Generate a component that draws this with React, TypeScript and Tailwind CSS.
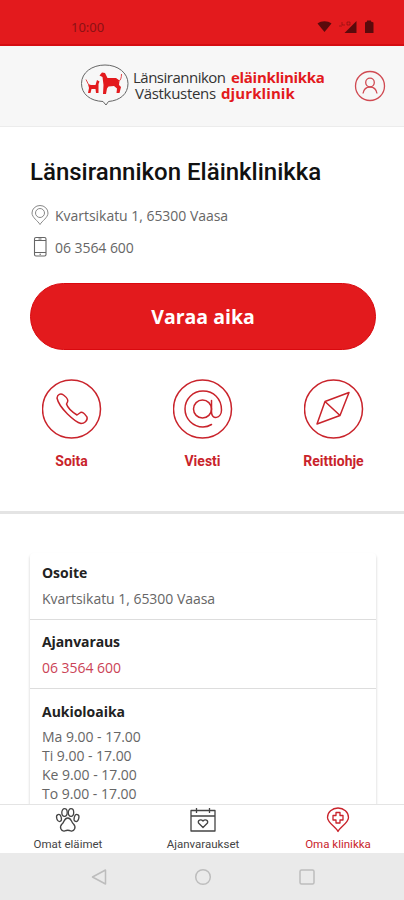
import type { ReactNode } from 'react';

const openingHours = ['Ma 9.00 - 17.00', 'Ti 9.00 - 17.00', 'Ke 9.00 - 17.00', 'To 9.00 - 17.00'];

function StatusBar() {
  return (
    <div className="flex h-[46px] shrink-0 items-center border-b-2 border-[#d50d12] bg-[#e31a1d] pt-[9px] pl-[71px] text-[#5a0a0c]">
      <span className="w-[35px] font-['Noto_Sans',sans-serif] text-[13px] leading-4 text-[#8c1114]">10:00</span>
      <svg className="ml-[211px] h-4 w-[60px]" viewBox="0 0 60 16" fill="currentColor">
        <path d="M.5 4.5C4.500 1.500 10.500 1.500 14.500 4.500L7.500 13Z" />
        <path d="M39.500 2V14H27.500Z" />
        <path d="M22 7h3M25 3v3h3M30 3h3v3h-3z" fill="none" stroke="currentColor" strokeWidth="1" opacity=".45" />
        <path d="M48 3.500L50 2.500V1.500H54V2.500L56.500 3.500V14H48Z" />
      </svg>
    </div>
  );
}

function Logo() {
  return (
    <div className="flex items-start">
      <svg className="h-[44px] w-[50px]" viewBox="0 0 50 44">
        <path
          d="M23 38.500C10 38 1.500 31 1.500 20.500C1.500 9.500 12 2 25 2C38 2 48 10 48 20.500C48 31 40 37.500 28.500 38.500L26 42Z"
          fill="none"
          stroke="#666"
          strokeWidth="1"
        />
        <g fill="#e31a1d">
          <path d="M8 21L11 22H15.500L17 17L19.500 18.500L18.500 21V30H16L15.500 26H11.500L10.500 30H8L9 25Z" />
          <path d="M19.500 12.500L22 9.500L25 10L27.500 15H36L39.500 17.500L39 22L41 24L39.500 30H36.500L37 25.500L34 23L28.500 23.500L27 25.500L26 31H23L23.500 22L22.500 14Z" />
        </g>
        <path d="M9 22.500L6 16.500M38.500 18.500Q41.500 17 41.500 11" fill="none" stroke="#e3484b" strokeWidth="1" />
      </svg>
      <div className="mt-[6px] ml-[3px] font-['Open_Sans',sans-serif] text-[15px] leading-4 whitespace-nowrap text-[#333]">
        <p className="flex">
          <span className="w-[98px] tracking-[-0.5px]">Länsirannikon</span>
          <b className="tracking-[-0.3px] text-[#e31a1d]">eläinklinikka</b>
        </p>
        <p className="flex pl-[2px]">
          <span className="w-[86px] tracking-[-0.3px]">Västkustens</span>
          <b className="tracking-[0.1px] text-[#e31a1d]">djurklinik</b>
        </p>
      </div>
    </div>
  );
}

function Header() {
  return (
    <header className="flex h-[81px] shrink-0 items-start justify-between border-b border-[#ececec] bg-[#f7f7f7] pt-[17px] pr-[18px] pl-[80px]">
      <Logo />
      <svg className="mt-[7px] h-8 w-8" viewBox="0 0 32 32" fill="none" stroke="#d04a52" strokeWidth="1.3">
        <circle cx="16" cy="16" r="14.500" />
        <circle cx="16" cy="12.500" r="4.300" />
        <path d="M9 23.500C10 18 13 17 16 17S22 18 23 23.500" />
      </svg>
    </header>
  );
}

function ActionButton({ label, children }: { label: string; children: ReactNode }) {
  return (
    <button className="flex w-[60px] flex-col items-center text-[#c9232b]">
      <svg className="h-[60px] w-[60px]" viewBox="0 0 60 60" fill="none" stroke="currentColor" strokeWidth="1.5" strokeLinecap="round" strokeLinejoin="round">
        <circle cx="29.500" cy="30" r="29" />
        {children}
      </svg>
      <span className="mt-3 mr-px font-['Roboto',sans-serif] text-[14px] leading-5 font-bold whitespace-nowrap">{label}</span>
    </button>
  );
}

function NavItem({ label, className, children }: { label: string; className: string; children: ReactNode }) {
  return (
    <button className={`flex w-[80px] flex-col items-center ${className}`}>
      <svg className="h-[26px] w-[26px]" viewBox="0 0 26 26" fill="none" stroke="currentColor" strokeWidth="1.3" strokeLinejoin="round">
        {children}
      </svg>
      <span className="mt-[3px] font-['Roboto',sans-serif] text-[11.5px] leading-4 whitespace-nowrap">{label}</span>
    </button>
  );
}

export default function App() {
  return (
    <div className="flex h-[900px] w-[404px] flex-col overflow-hidden bg-white font-['Open_Sans',sans-serif] text-[#666]">
      <StatusBar />
      <Header />

      <main className="min-h-0 flex-1 overflow-hidden">
        <section className="h-[387px] border-b-[3px] border-[#e4e4e4] px-[30px] pt-[30px]">
          <h1 className="font-['Roboto',sans-serif] text-[24px] leading-[30px] font-medium whitespace-nowrap text-[#111]">
            Länsirannikon Eläinklinikka
          </h1>
          <div className="mt-[17px] flex h-[22px] items-center text-[14px] tracking-[-0.03px]">
            <svg className="mr-[5px] h-[22px] w-5" viewBox="0 0 20 22" fill="none" stroke="#888" strokeWidth="1">
              <path d="M10 20.500C8 17 2 13.500 2 9A8 7.500 0 0 1 18 9C18 13.500 12 17 10 20.500Z" />
              <circle cx="10" cy="9" r="4.500" />
            </svg>
            <span>Kvartsikatu 1, 65300 Vaasa</span>
          </div>
          <div className="mt-[10px] flex h-[22px] items-center text-[14px] tracking-[-0.05px]">
            <svg className="mr-[5px] h-[22px] w-5" viewBox="0 0 20 22" fill="none" stroke="#666" strokeWidth="1.1">
              <rect x="4.500" y="1.500" width="11.500" height="18.500" rx="1.500" />
              <path d="M4.500 4.500h11.500M4.500 16.500h11.500M8.500 3h3M9.500 18.300h1.500" />
            </svg>
            <span>06 3564 600</span>
          </div>
          <button className="mt-[25px] flex h-[67px] w-[346px] items-center justify-center rounded-full border border-[#d9090f] bg-[#e31a1d] pt-px text-[19.5px] font-bold text-white">
            Varaa aika
          </button>
          <div className="mt-[29px] ml-[12px] flex w-[322px] justify-between">
            <ActionButton label="Soita">
              <path d="M15 19C15.500 15.500 18.500 14 21.500 16C24 18 27 20 25.500 23L24.500 25C26 30 31 33.500 35 36L38.500 33.500C41 32 43 35.500 45 38C46 42 42 44.500 39 44.500C33 43 17 29 15 19Z" />
            </ActionButton>
            <ActionButton label="Viesti">
              <circle cx="29.500" cy="30" r="9" />
              <path d="M38.500 21.500V33C38.500 41.500 48.500 39.500 48.500 31C48.500 19.500 40.500 12 30 12A18 18 0 0 0 30 48Q34.500 48 38.500 45.500" />
            </ActionButton>
            <ActionButton label="Reittiohje">
              <path d="M45 13.500L21 22.500L13 45L36 36.500ZM21 22.500L36 36.500" />
            </ActionButton>
          </div>
        </section>

        <section className="mx-[30px] mt-[39px] w-[346px] rounded-sm text-[14px] tracking-[-0.03px] shadow-[0_2px_3px_rgba(0,0,0,0.2)]">
          <div className="h-[67px] border-b border-[#ddd] px-3 pt-[10px]">
            <h2 className="leading-5 font-bold text-[#222]">Osoite</h2>
            <p className="mt-[6px] leading-5">Kvartsikatu 1, 65300 Vaasa</p>
          </div>
          <div className="h-[69px] border-b border-[#ddd] px-3 pt-[12px]">
            <h2 className="leading-5 font-bold tracking-[-0.1px] text-[#222]">Ajanvaraus</h2>
            <p className="mt-[6px] leading-5 text-[#cb4356]">06 3564 600</p>
          </div>
          <div className="h-[180px] px-3 pt-[13px]">
            <h2 className="leading-5 font-bold text-[#222]">Aukioloaika</h2>
            <div className="mt-[5px]">
              {openingHours.map(line => (
                <p key={line} className="leading-[19px]">{line}</p>
              ))}
            </div>
          </div>
        </section>
      </main>

      <nav className="flex h-[49px] shrink-0 justify-between border-t border-[#e4e4e4] bg-white pt-[2px] pr-[26px] pl-[28px]">
        <NavItem label="Omat eläimet" className="text-[#444]">
          <ellipse cx="9.500" cy="5.500" rx="2.700" ry="3.800" />
          <ellipse cx="16" cy="5.500" rx="2.700" ry="3.800" />
          <ellipse cx="4" cy="11" rx="2.300" ry="3.600" transform="rotate(-15 4 11)" />
          <ellipse cx="21.500" cy="11" rx="2.300" ry="3.600" transform="rotate(15 21.500 11)" />
          <path d="M12.800 11C9 11 9.500 15 7 17C4 20 6 24.500 9.500 24Q12.800 22.500 16 24C19.500 24.500 21.500 20 18.500 17C16 15 16.500 11 12.800 11Z" />
        </NavItem>
        <NavItem label="Ajanvaraukset" className="text-[#444]">
          <path d="M1 3.500H25V24H1ZM1 9H25M6.500 1V6M19.500 1V6" />
          <path d="M13 20.500L8.500 16C7.500 13 11 12 13 14C15 12 18.500 13 17.500 16Z" />
        </NavItem>
        <NavItem label="Oma klinikka" className="text-[#c9232b]">
          <path d="M13 24.500C11 20 2.500 16 2.500 10.500A10.500 9.500 0 0 1 23.500 10.500C23.500 16 15 20 13 24.500Z" />
          <path d="M11 5.500H15V8.500H18V13H15V16H11V13H8V8.500H11Z" />
        </NavItem>
      </nav>

      <div className="flex h-[47px] shrink-0 items-start justify-between bg-[#eaeaea] pt-[15px] pr-[88px] pl-[91px] text-[#bdbdbd]">
        <svg className="h-[18px] w-4" viewBox="0 0 16 18" fill="none" stroke="currentColor" strokeWidth="1.5" strokeLinejoin="round">
          <path d="M1.500 9L14.500 2V16Z" />
        </svg>
        <svg className="h-[18px] w-[18px]" viewBox="0 0 18 18" fill="none" stroke="currentColor" strokeWidth="1.5">
          <circle cx="9" cy="9" r="7.300" />
        </svg>
        <svg className="h-[18px] w-[18px]" viewBox="0 0 18 18" fill="none" stroke="currentColor" strokeWidth="1.5">
          <rect x="2" y="2" width="14" height="14" rx="1.500" />
        </svg>
      </div>
    </div>
  );
}
